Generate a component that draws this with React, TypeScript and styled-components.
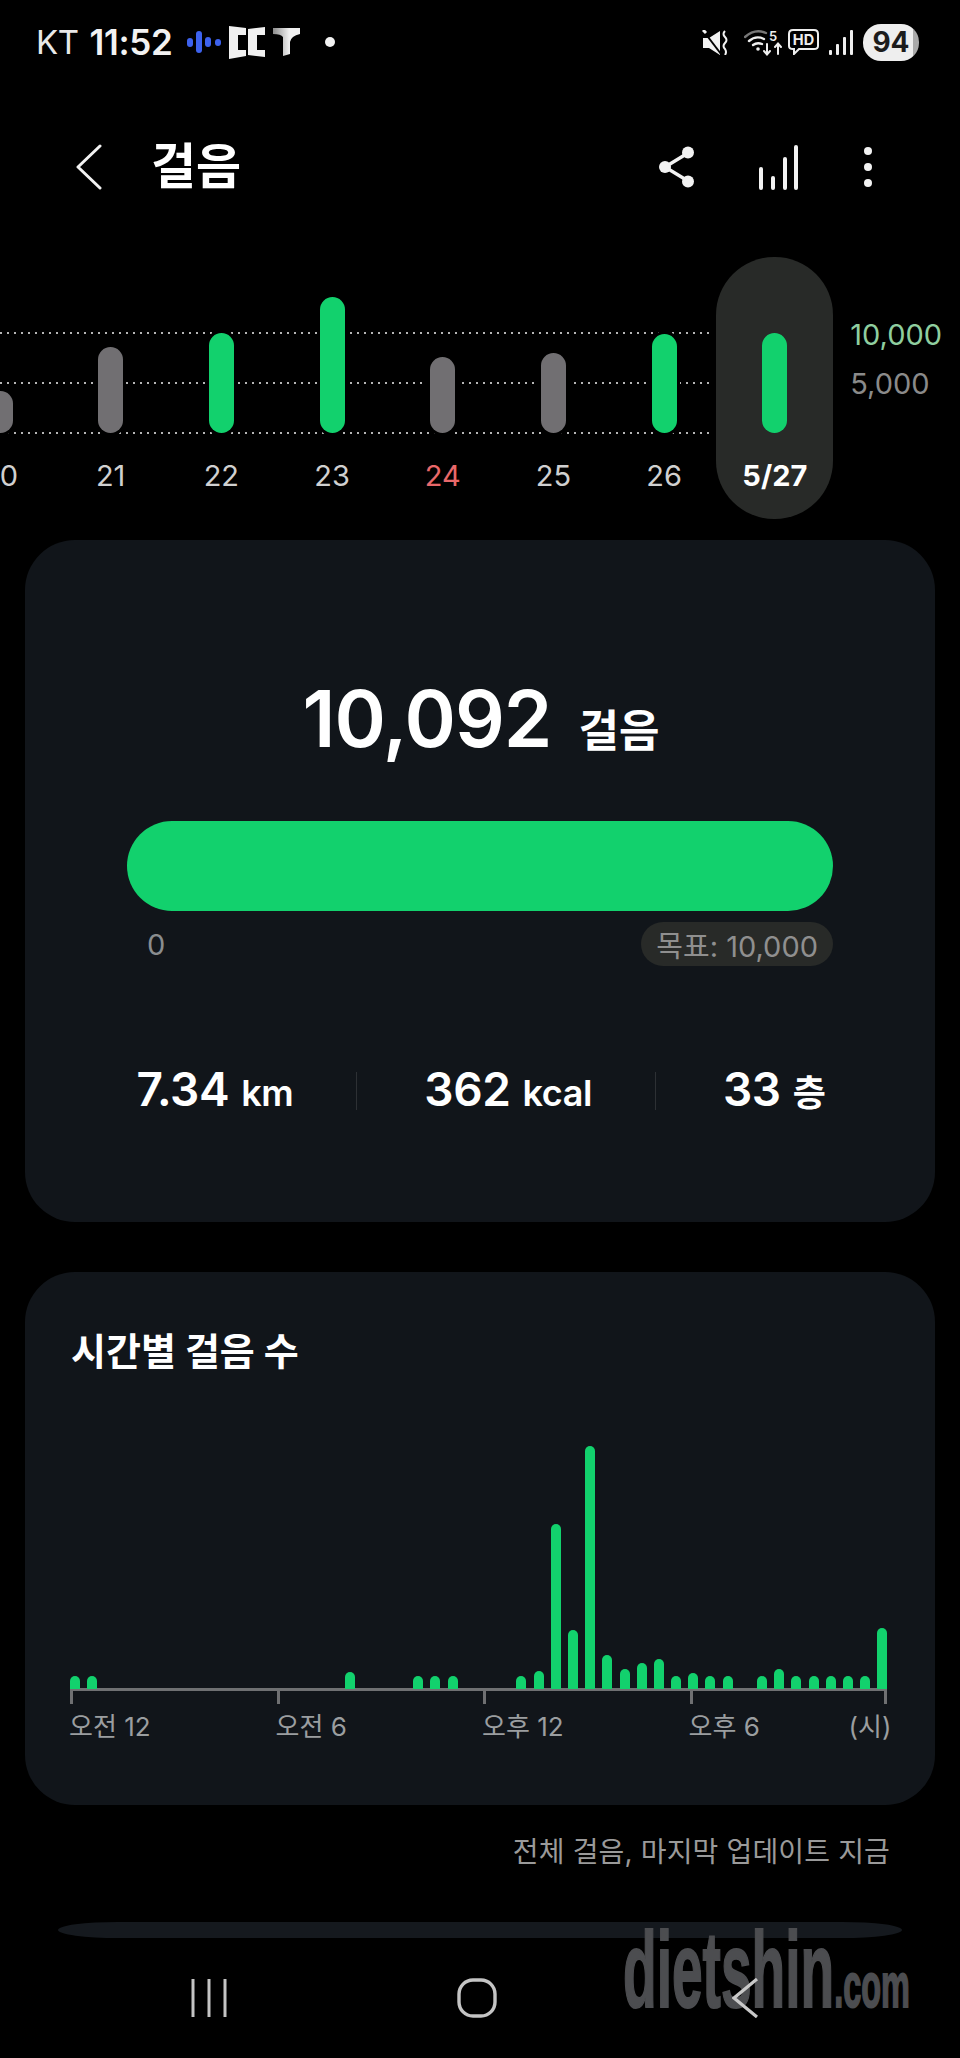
import React from "react";
import styled, { createGlobalStyle } from "styled-components";

const FONT = `Inter, "Noto Sans CJK KR", sans-serif`;

const GlobalStyle = createGlobalStyle`
  html, body {
    margin: 0;
    padding: 0;
    background: #000;
  }
`;

const Page = styled.div`
  position: relative;
  width: 960px;
  height: 2058px;
  overflow: hidden;
  background: #000;
  color: #fff;
  font-family: ${FONT};
`;

const StatusBar = styled.div`
  display: flex;
  align-items: center;
  height: 84px;
  padding: 0 41px 0 36px;
`;

const Carrier = styled.span`
  font-size: 33px;
  font-weight: 400;
  letter-spacing: -0.5px;
  color: #e8e8e8;
`;

const Clock = styled.span`
  margin-left: 11px;
  font-size: 35px;
  font-weight: 600;
  letter-spacing: -0.3px;
  color: #f2f2f2;
`;

const StatusLeft = styled.div`
  display: flex;
  align-items: center;
  gap: 8px;
  margin-left: 14px;
`;

const Dot = styled.span`
  width: 10px;
  height: 10px;
  margin-left: 17px;
  border-radius: 50%;
  background: #f2f2f2;
`;

const StatusRight = styled.div`
  display: flex;
  align-items: center;
  margin-left: auto;
`;

const StatusSlot = styled.div<{ $gap: number }>`
  display: flex;
  margin-right: ${(p) => p.$gap}px;
`;

const Battery = styled.div`
  display: flex;
  align-items: center;
  justify-content: center;
  width: 56px;
  height: 37px;
  border-radius: 18px;
  background: linear-gradient(90deg, #eeeeee 90%, #a9a9a9 90%);
  color: #1c1c1c;
  font-size: 28px;
  font-weight: 700;
`;

const Header = styled.div`
  display: flex;
  align-items: center;
  height: 166px;
  padding: 0 85px 0 76px;
`;

const Title = styled.h1`
  margin: 0 0 0 49px;
  font-size: 49px;
  font-weight: 700;
  line-height: 60px;
`;

const Actions = styled.div`
  display: flex;
  align-items: center;
  gap: 63px;
  margin-left: auto;
`;

const DayStrip = styled.div`
  position: relative;
  display: flex;
  height: 262px;
  margin: 7px 0 21px;
  overflow: hidden;
`;

const GridLines = styled.div`
  position: absolute;
  top: 75px;
  left: 0;
  display: flex;
  flex-direction: column;
  justify-content: space-between;
  width: 713px;
  height: 102px;
`;

const GridLine = styled.div`
  height: 2px;
  background: repeating-linear-gradient(90deg, #b5b5b5 0 2px, transparent 2px 7px);
`;

const DayColumns = styled.div`
  position: relative;
  display: flex;
  flex-shrink: 0;
  margin-left: -55.35px;
`;

const DayColumn = styled.div<{ $selected?: boolean }>`
  display: flex;
  flex-direction: column;
  align-items: center;
  width: ${(p) => (p.$selected ? "117px" : "110.7px")};
  height: 262px;
  margin: ${(p) => (p.$selected ? "0 -3.15px" : "0")};
  border-radius: 58px;
  background: ${(p) => (p.$selected ? "#282a28" : "transparent")};
`;

const BarSlot = styled.div`
  display: flex;
  align-items: flex-end;
  height: 176px;
`;

const DayBar = styled.div<{ $height: number; $reached: boolean; $selected?: boolean }>`
  width: 25px;
  height: ${(p) => p.$height}px;
  border-radius: 13px;
  background: ${(p) => (p.$reached ? "#12d16d" : "#716f72")};
  box-shadow: ${(p) => (p.$selected ? "none" : "0 0 0 3px #000")};
`;

const DayLabel = styled.div<{ $color: string; $selected?: boolean }>`
  margin-top: 25px;
  font-size: 29px;
  font-weight: ${(p) => (p.$selected ? 700 : 400)};
  line-height: 36px;
  color: ${(p) => p.$color};
`;

const YAxis = styled.div`
  display: flex;
  flex-direction: column;
  gap: 13px;
  margin-left: 20px;
  padding-top: 60px;
`;

const YLabel = styled.div<{ $color: string }>`
  font-size: 29px;
  line-height: 36px;
  color: ${(p) => p.$color};
`;

const Card = styled.section`
  height: 682px;
  margin: 0 25px;
  border-radius: 50px;
  background: #11151a;
`;

const StepsRow = styled.div`
  display: flex;
  align-items: baseline;
  justify-content: center;
  gap: 27px;
  padding: 134px 0 0 2px;
  line-height: 90px;
`;

const StepsValue = styled.span`
  font-size: 78px;
  font-weight: 600;
  letter-spacing: -1px;
`;

const StepsUnit = styled.span`
  font-size: 44px;
  font-weight: 700;
`;

const Progress = styled.div`
  height: 90px;
  margin: 45px 102px 0;
  border-radius: 45px;
  background: #12d16d;
`;

const GoalRow = styled.div`
  display: flex;
  align-items: center;
  justify-content: space-between;
  height: 44px;
  margin: 11px 102px 0 122px;
`;

const GoalStart = styled.span`
  font-size: 29px;
  color: #8a8d8f;
`;

const GoalPill = styled.span`
  display: flex;
  align-items: center;
  height: 44px;
  padding: 0 15px;
  border-radius: 22px;
  background: #282a28;
  font-size: 29px;
  color: #8f8f8f;
`;

const Stats = styled.div`
  display: flex;
  align-items: center;
  justify-content: center;
  gap: 63px;
  margin-top: 98px;
  padding-left: 2px;
`;

const Stat = styled.div`
  display: flex;
  align-items: baseline;
  gap: 12px;
  line-height: 50px;
`;

const StatValue = styled.span`
  font-size: 46px;
  font-weight: 600;
  letter-spacing: -0.4px;
`;

const StatUnit = styled.span`
  font-size: 36px;
  font-weight: 600;
  letter-spacing: -0.4px;
`;

const Divider = styled.div`
  width: 1px;
  height: 38px;
  margin-right: 4px;
  background: #2d3034;
`;

const ChartCard = styled(Card)`
  height: 533px;
  margin-top: 50px;
  padding: 59px 48px 0 45px;
  box-sizing: border-box;
`;

const ChartTitle = styled.h2`
  margin: 0 0 68px 1px;
  font-size: 38px;
  font-weight: 700;
  line-height: 40px;
`;

const HourBars = styled.div`
  display: flex;
  align-items: flex-end;
  gap: 7.2px;
  height: 250px;
  margin-left: -0.5px;
`;

const HourBar = styled.div<{ $height: number }>`
  flex: 0 0 10px;
  height: ${(p) => p.$height}px;
  border-radius: 5px 5px 0 0;
  background: #12d16d;
`;

const Axis = styled.div`
  display: grid;
  grid-template-columns: repeat(3, 206.5px) 197px;
  width: 816.5px;
  height: 13px;
  margin-top: -1px;
  border-top: 3px solid #6f7072;
`;

const Tick = styled.div<{ $last?: boolean }>`
  border-left: 3px solid #6f7072;
  border-right: ${(p) => (p.$last ? "3px solid #6f7072" : "none")};
`;

const AxisLabels = styled.div`
  display: grid;
  grid-template-columns: repeat(3, 206.5px) 203px;
  margin: 5px 0 0 -1px;
  font-size: 26px;
  line-height: 36px;
  color: #9b9ea0;
`;

const LastAxisCell = styled.div`
  display: flex;
  justify-content: space-between;
`;

const UpdatedNote = styled.div`
  margin-top: 29px;
  padding-right: 70px;
  font-size: 28px;
  letter-spacing: 0.15px;
  line-height: 36px;
  text-align: right;
  color: #9a9a9a;
`;

const NextCard = styled.div`
  height: 16px;
  margin: 52px 58px 0;
  border-radius: 60px / 8px;
  background: #15191e;
`;

const NavBar = styled.nav`
  position: relative;
  z-index: 2;
  display: grid;
  grid-template-columns: repeat(3, 268px);
  justify-content: center;
  justify-items: center;
  align-items: center;
  height: 120px;
  padding-right: 6px;
`;

const Watermark = styled.div`
  position: absolute;
  top: 1910px;
  left: 623px;
  z-index: 1;
  font-family: "Liberation Sans", sans-serif;
  font-size: 107px;
  font-weight: 700;
  line-height: 120px;
  white-space: nowrap;
  color: #4c4d50;
  -webkit-text-stroke: 2px #4c4d50;
  transform: scaleX(0.515);
  transform-origin: left top;
`;

const WatermarkTld = styled.span`
  font-size: 63px;
`;

const days = [
  { label: "20", height: 42, reached: false, color: "#d0d0d0" },
  { label: "21", height: 86, reached: false, color: "#d0d0d0" },
  { label: "22", height: 100, reached: true, color: "#d0d0d0" },
  { label: "23", height: 136, reached: true, color: "#d0d0d0" },
  { label: "24", height: 76, reached: false, color: "#e9686a" },
  { label: "25", height: 80, reached: false, color: "#d0d0d0" },
  { label: "26", height: 99, reached: true, color: "#d0d0d0" },
  { label: "5/27", height: 100, reached: true, color: "#ffffff", selected: true },
];

const hourly: Record<number, number> = {
  0: 13, 1: 13, 16: 17, 20: 13, 21: 13, 22: 13, 26: 13, 27: 18, 28: 165,
  29: 59, 30: 243, 31: 34, 32: 20, 33: 26, 34: 30, 35: 13, 36: 16, 37: 13,
  38: 13, 40: 13, 41: 20, 42: 13, 43: 13, 44: 13, 45: 13, 46: 13, 47: 61,
};

const VoiceIcon = () => (
  <svg width="34" height="24" viewBox="0 0 34 24" fill="#3d62ee">
    <rect x="0" y="8" width="6" height="9" rx="3" />
    <rect x="9" y="1" width="6" height="22" rx="3" />
    <rect x="18" y="7" width="6" height="10" rx="3" />
    <rect x="28" y="9" width="6" height="7" rx="3" />
  </svg>
);

const ScreenLogo = () => (
  <svg width="36" height="33" viewBox="0 0 36 33" fill="#f0f0f0">
    <path d="M0 0 L17 2 V9 H9 V24 H17 V30 L0 33 Z" />
    <path d="M19 3 L36 1 V9 H28 V24 H36 V31 L19 29 Z" />
  </svg>
);

const TLogo = () => (
  <svg width="27" height="28" viewBox="0 0 27 28">
    <defs>
      <linearGradient id="tbar" x1="0" x2="1" y1="0" y2="0">
        <stop offset="0" stopColor="#8c8c8c" />
        <stop offset="0.6" stopColor="#f0f0f0" />
      </linearGradient>
    </defs>
    <path d="M0 0 H27 V6 Q18 8 17 14 V26 L10 28 V9 Q8 6 0 6 Z" fill="url(#tbar)" />
  </svg>
);

const MuteIcon = () => (
  <svg width="27" height="25" viewBox="0 0 27 25">
    <path d="M1 8 H7 L18 1 V25 L7 18 H1 Z" fill="#f2f2f2" />
    <path d="M3 3 L19 24" stroke="#000" strokeWidth="2" />
    <path d="M1 0 L4 3" stroke="#f2f2f2" strokeWidth="3" />
    <path d="M23 1 Q20 4 23 7 Q26 10 23 13 Q20 16 23 19 Q25 22 23 25" fill="none" stroke="#f2f2f2" strokeWidth="2" />
  </svg>
);

const WifiIcon = () => (
  <svg width="38" height="27" viewBox="0 0 38 27" fill="none" strokeLinecap="round">
    <path d="M1 8 Q11 -1 22 4" stroke="#777" strokeWidth="2.4" />
    <path d="M5 12 Q12 6 20 10" stroke="#eee" strokeWidth="2.4" />
    <path d="M9 16 Q13 13 18 15" stroke="#eee" strokeWidth="2.4" />
    <circle cx="14" cy="20" r="1.8" fill="#eee" />
    <text x="25" y="12" fontSize="13" fontWeight="600" fill="#eee" fontFamily="Inter, sans-serif">5</text>
    <path d="M23 15 V25 M20 22 L23 25.5 L26 22" stroke="#eee" strokeWidth="2" />
    <path d="M34 25 V15 M31 18 L34 14.5 L37 18" stroke="#eee" strokeWidth="2" />
  </svg>
);

const HdIcon = () => (
  <svg width="31" height="26" viewBox="0 0 31 26" fill="none">
    <path d="M5 1 H26 Q30 1 30 5 V17 Q30 20 26 20 H11 L6 25 V20 H5 Q1 20 1 17 V5 Q1 1 5 1 Z" stroke="#eee" strokeWidth="2" />
    <text x="15.5" y="16" fontSize="14.5" fontWeight="700" fill="#eee" textAnchor="middle" fontFamily="Inter, sans-serif">HD</text>
  </svg>
);

const SignalIcon = () => (
  <svg width="24" height="25" viewBox="0 0 24 25" fill="#eee">
    <rect x="0" y="20" width="3" height="5" rx="1" />
    <rect x="7" y="14" width="3" height="11" rx="1" />
    <rect x="14" y="7" width="3" height="18" rx="1" />
    <rect x="21" y="0" width="3" height="25" rx="1" />
  </svg>
);

const BackIcon = () => (
  <svg width="26" height="46" viewBox="0 0 26 46" fill="none" stroke="#f2f2f2" strokeWidth="3" strokeLinecap="round" strokeLinejoin="round">
    <path d="M24 2 L2 23 L24 44" />
  </svg>
);

const ShareIcon = () => (
  <svg width="36" height="42" viewBox="0 0 36 42" fill="#f2f2f2">
    <path d="M29 7 L6 21 L29 35" fill="none" stroke="#f2f2f2" strokeWidth="3.4" />
    <circle cx="29" cy="6.5" r="6" />
    <circle cx="6" cy="21" r="6" />
    <circle cx="29" cy="35.5" r="6" />
  </svg>
);

const BarsIcon = () => (
  <svg width="40" height="45" viewBox="0 0 40 45" fill="#f2f2f2">
    <rect x="1" y="22" width="4" height="23" rx="2" />
    <rect x="13" y="31" width="4" height="14" rx="2" />
    <rect x="25" y="12" width="4" height="33" rx="2" />
    <rect x="36" y="0" width="4" height="45" rx="2" />
  </svg>
);

const KebabIcon = () => (
  <svg width="14" height="40" viewBox="-3 0 14 40" fill="#f2f2f2">
    <circle cx="4" cy="4" r="4" />
    <circle cx="4" cy="20" r="4" />
    <circle cx="4" cy="36" r="4" />
  </svg>
);

const RecentsIcon = () => (
  <svg width="36" height="38" viewBox="0 0 36 38" stroke="#c4c4c4" strokeWidth="3">
    <path d="M2 0 V38 M18 0 V38 M34 0 V38" />
  </svg>
);

const HomeIcon = () => (
  <svg width="40" height="40" viewBox="0 0 40 40" fill="none" stroke="#c4c4c4" strokeWidth="3.4">
    <rect x="2" y="2" width="36" height="36" rx="14" />
  </svg>
);

const NavBackIcon = () => (
  <svg width="26" height="40" viewBox="0 0 26 40" fill="none" stroke="#c8c8c8" strokeWidth="3.2">
    <path d="M25 1 L2 20 L25 39" />
  </svg>
);

const App = () => {
  return (
    <Page>
      <GlobalStyle />
      <StatusBar>
        <Carrier>KT</Carrier>
        <Clock>11:52</Clock>
        <StatusLeft>
          <VoiceIcon />
          <ScreenLogo />
          <TLogo />
          <Dot />
        </StatusLeft>
        <StatusRight>
          <StatusSlot $gap={15}>
            <MuteIcon />
          </StatusSlot>
          <StatusSlot $gap={6}>
            <WifiIcon />
          </StatusSlot>
          <StatusSlot $gap={10}>
            <HdIcon />
          </StatusSlot>
          <StatusSlot $gap={10}>
            <SignalIcon />
          </StatusSlot>
          <Battery>94</Battery>
        </StatusRight>
      </StatusBar>

      <Header>
        <BackIcon />
        <Title>걸음</Title>
        <Actions>
          <ShareIcon />
          <BarsIcon />
          <KebabIcon />
        </Actions>
      </Header>

      <DayStrip>
        <GridLines>
          <GridLine />
          <GridLine />
          <GridLine />
        </GridLines>
        <DayColumns>
          {days.map((day) => (
            <DayColumn key={day.label} $selected={day.selected}>
              <BarSlot>
                <DayBar $height={day.height} $reached={day.reached} $selected={day.selected} />
              </BarSlot>
              <DayLabel $color={day.color} $selected={day.selected}>
                {day.label}
              </DayLabel>
            </DayColumn>
          ))}
        </DayColumns>
        <YAxis>
          <YLabel $color="#8fce9f">10,000</YLabel>
          <YLabel $color="#8a8a8a">5,000</YLabel>
        </YAxis>
      </DayStrip>

      <Card>
        <StepsRow>
          <StepsValue>10,092</StepsValue>
          <StepsUnit>걸음</StepsUnit>
        </StepsRow>
        <Progress />
        <GoalRow>
          <GoalStart>0</GoalStart>
          <GoalPill>목표: 10,000</GoalPill>
        </GoalRow>
        <Stats>
          <Stat>
            <StatValue>7.34</StatValue>
            <StatUnit>km</StatUnit>
          </Stat>
          <Divider />
          <Stat>
            <StatValue>362</StatValue>
            <StatUnit>kcal</StatUnit>
          </Stat>
          <Divider />
          <Stat>
            <StatValue>33</StatValue>
            <StatUnit>층</StatUnit>
          </Stat>
        </Stats>
      </Card>

      <ChartCard>
        <ChartTitle>시간별 걸음 수</ChartTitle>
        <HourBars>
          {Array.from({ length: 48 }, (_, i) => (
            <HourBar key={i} $height={hourly[i] ?? 0} />
          ))}
        </HourBars>
        <Axis>
          <Tick />
          <Tick />
          <Tick />
          <Tick $last />
        </Axis>
        <AxisLabels>
          <div>오전 12</div>
          <div>오전 6</div>
          <div>오후 12</div>
          <LastAxisCell>
            <span>오후 6</span>
            <span>(시)</span>
          </LastAxisCell>
        </AxisLabels>
      </ChartCard>

      <UpdatedNote>전체 걸음, 마지막 업데이트 지금</UpdatedNote>
      <NextCard />

      <Watermark>
        dietshin<WatermarkTld>.com</WatermarkTld>
      </Watermark>

      <NavBar>
        <RecentsIcon />
        <HomeIcon />
        <NavBackIcon />
      </NavBar>
    </Page>
  );
};

export default App;
